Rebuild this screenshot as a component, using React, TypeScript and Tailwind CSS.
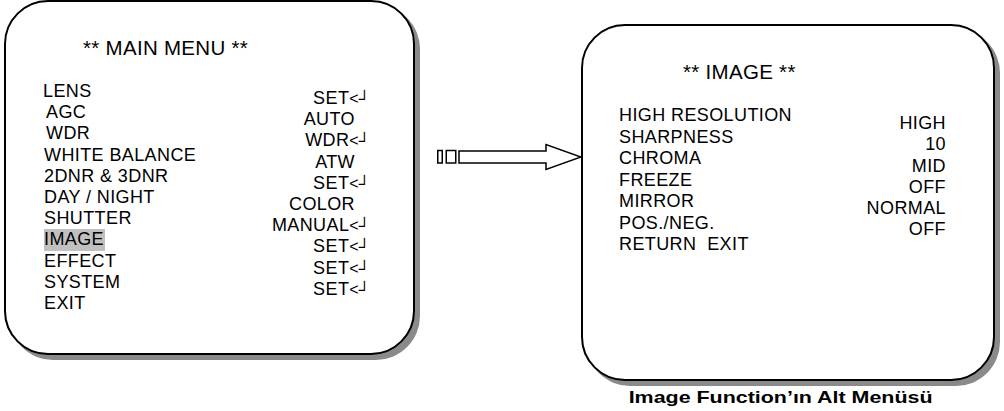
const mainLabels = [
  { text: 'LENS', pad: 'pl-[0px]' },
  { text: 'AGC', pad: 'pl-[3px]' },
  { text: 'WDR', pad: 'pl-[3px]' },
  { text: 'WHITE BALANCE', pad: 'pl-[1px]' },
  { text: '2DNR & 3DNR', pad: 'pl-[1px]' },
  { text: 'DAY / NIGHT', pad: 'pl-[1px]' },
  { text: 'SHUTTER', pad: 'pl-[1px]' },
  { text: 'IMAGE', pad: 'pl-[1px]', active: true },
  { text: 'EFFECT', pad: 'pl-[1px]' },
  { text: 'SYSTEM', pad: 'pl-[1px]' },
  { text: 'EXIT', pad: 'pl-[1px]' },
];

const mainValues = [
  { text: 'SET', enter: true },
  { text: 'AUTO' },
  { text: 'WDR', enter: true },
  { text: 'ATW' },
  { text: 'SET', enter: true },
  { text: 'COLOR' },
  { text: 'MANUAL', enter: true },
  { text: 'SET', enter: true },
  { text: 'SET', enter: true },
  { text: 'SET', enter: true },
];

const imageLabels = ['HIGH RESOLUTION', 'SHARPNESS', 'CHROMA', 'FREEZE', 'MIRROR', 'POS./NEG.', 'RETURN  EXIT'];
const imageValues = ['HIGH', '10', 'MID', 'OFF', 'NORMAL', 'OFF'];

function MenuBox({ className, children }: { className: string; children: React.ReactNode }) {
  return (
    <div
      className={`shrink-0 rounded-[44px] border-2 border-black bg-white shadow-[5px_5px_0_#8a8a8a] ${className}`}
    >
      {children}
    </div>
  );
}

function Arrow() {
  return (
    <svg width="146" height="28" viewBox="0 0 146 28" className="shrink-0 ml-[22px] mt-[143px]">
      <rect x="0.75" y="7.5" width="4.5" height="12.5" fill="white" stroke="black" strokeWidth="1.5" />
      <rect x="9.25" y="7.5" width="9.5" height="12.5" fill="white" stroke="black" strokeWidth="1.5" />
      <polygon
        points="22,8 109,8 109,1.5 144,14 109,26.5 109,20 22,20"
        fill="white"
        stroke="black"
        strokeWidth="1.5"
        strokeLinejoin="miter"
      />
    </svg>
  );
}

export default function App() {
  return (
    <div className="w-[1004px] h-[411px] bg-white flex items-start text-black font-['Liberation_Sans',Arial,sans-serif] text-[18px] tracking-[0.4px]">
      {/* Main menu */}
      <MenuBox className="ml-[4px] w-[411px] h-[355px] pt-[35px] pl-[37px] pr-[43px]">
        <div className="pl-[40px] leading-[21px] text-[20.5px] tracking-[0.3px]">** MAIN MENU **</div>
        <div className="flex justify-between mt-[23px]">
          <div className="flex flex-col leading-[21.2px]">
            {mainLabels.map((l) => (
              <div key={l.text} className={l.pad}>
                <span className={l.active ? 'bg-[#c0c0c0] pr-[1px] inline-block' : ''}>{l.text}</span>
              </div>
            ))}
          </div>
          <div className="flex flex-col items-end leading-[21.2px] mt-[7px]">
            {mainValues.map((v, i) => (
              <div key={i} className={v.enter ? '' : 'pr-[15px]'}>
                {v.text}
                {v.enter && <span className="text-[16px] tracking-normal">&lt;┘</span>}
              </div>
            ))}
          </div>
        </div>
      </MenuBox>

      <Arrow />

      {/* Image sub menu */}
      <div className="flex flex-col ml-[-2px] mt-[24px]">
        <MenuBox className="w-[414px] h-[357px] pt-[35px] pl-[36px] pr-[47px]">
          <div className="pl-[64px] leading-[21px] text-[20.5px] tracking-[0.3px]">** IMAGE **</div>
          <div className="flex justify-between mt-[23px]">
            <div className="flex flex-col leading-[21.5px]">
              {imageLabels.map((l) => (
                <div key={l} className="whitespace-pre">
                  {l}
                </div>
              ))}
            </div>
            <div className="flex flex-col items-end leading-[21.3px] mt-[8px]">
              {imageValues.map((v, i) => (
                <div key={i}>{v}</div>
              ))}
            </div>
          </div>
        </MenuBox>
        <div className="mt-[7px] pr-[14px] flex justify-center">
          <span className="inline-block font-bold text-[17px] leading-[20px] tracking-normal scale-x-[1.26]">
            Image Function’ın Alt Menüsü
          </span>
        </div>
      </div>
    </div>
  );
}
